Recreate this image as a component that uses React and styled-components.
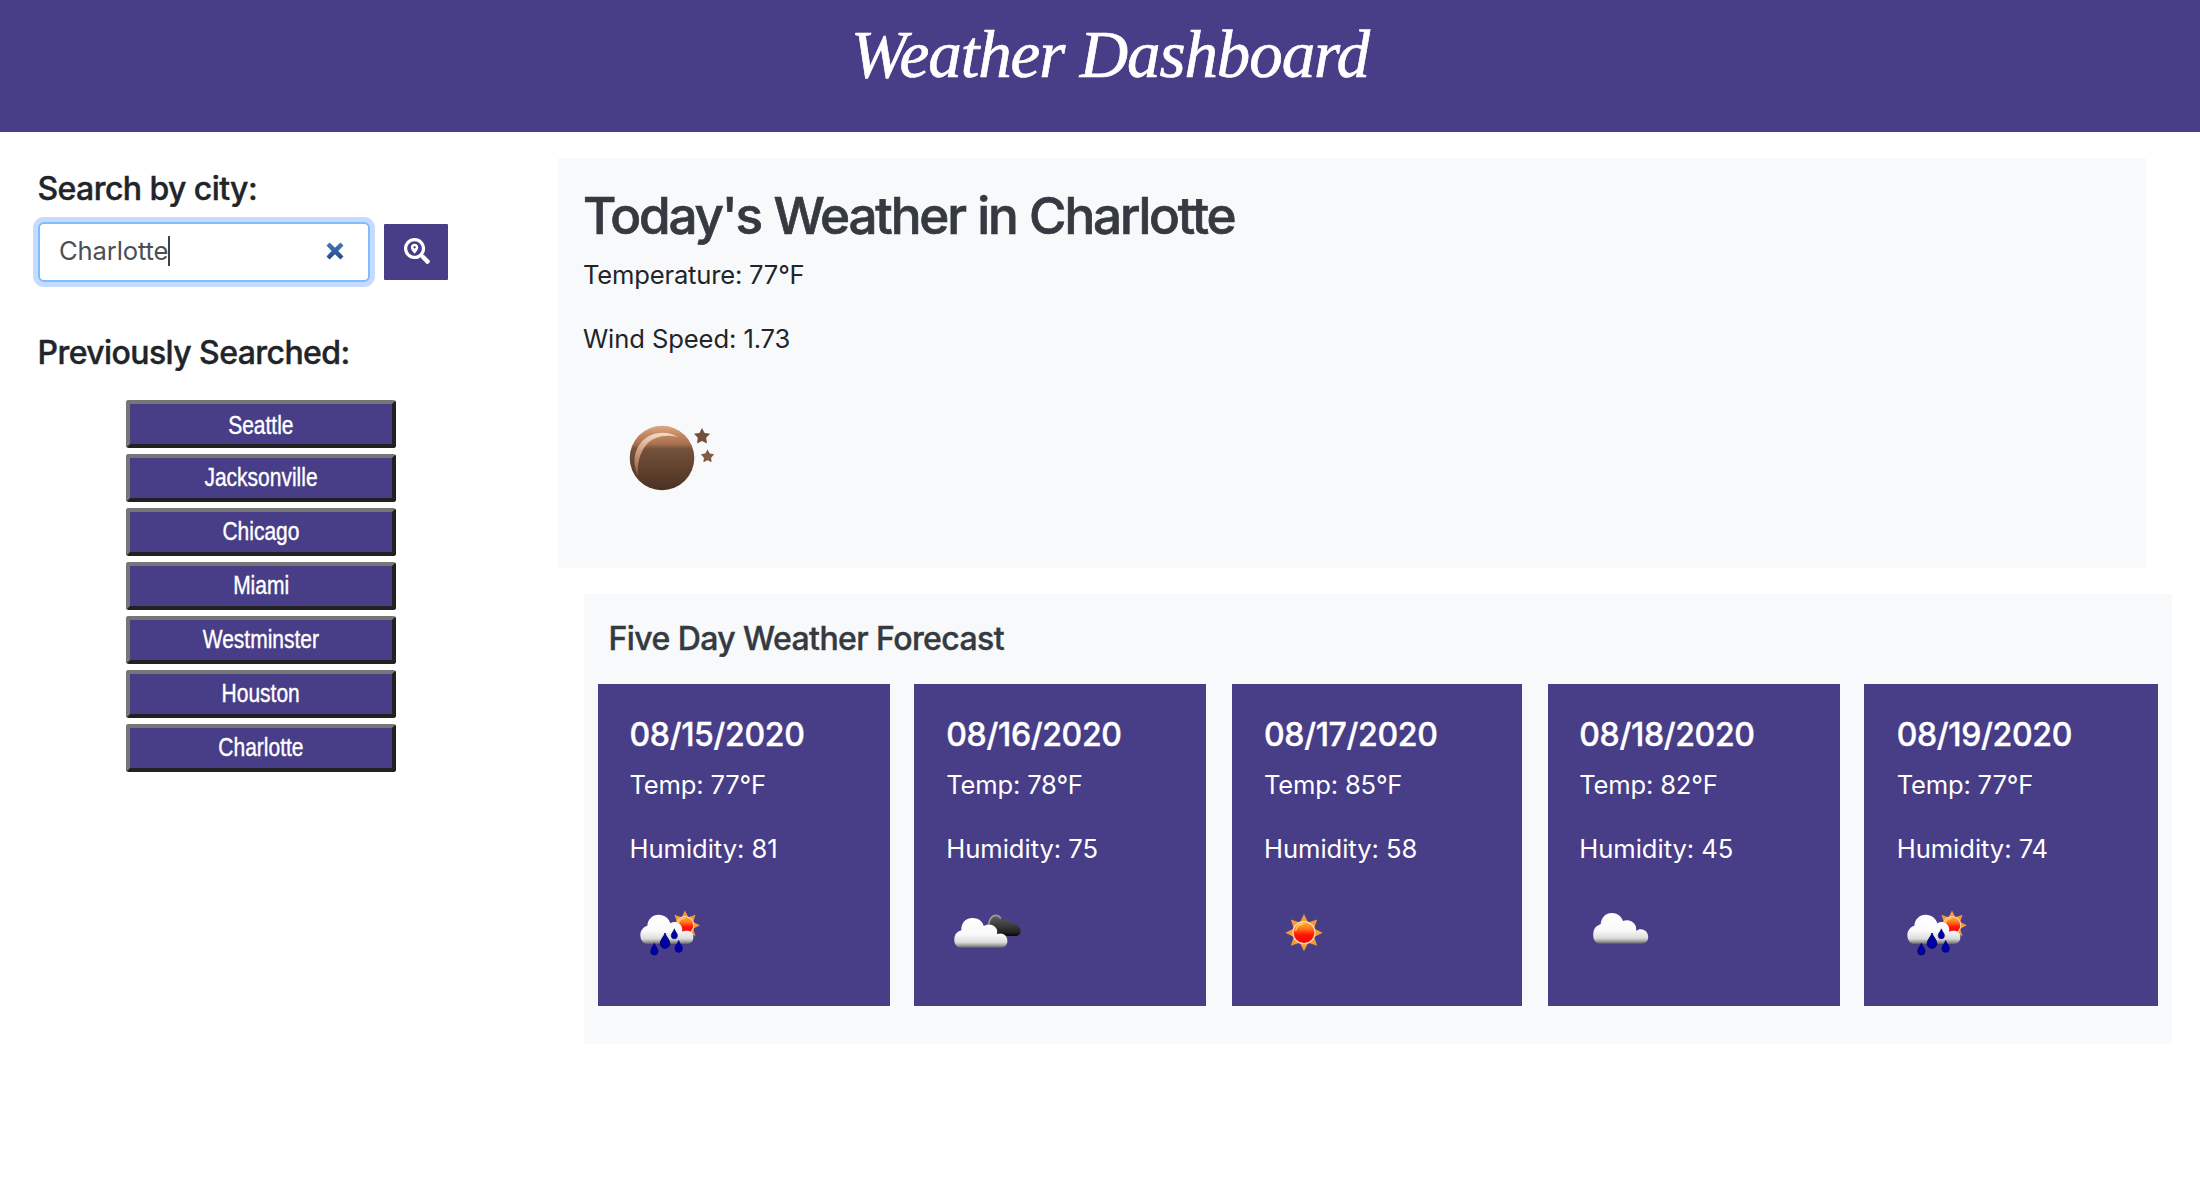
import React from "react";
import styled, { createGlobalStyle } from "styled-components";
import { FaSearchLocation } from "react-icons/fa";

const GlobalStyle = createGlobalStyle`
  *, *::before, *::after { box-sizing: border-box; }
  body {
    margin: 0;
    background: #fff;
    color: #212529;
    font-family: Inter, "Liberation Sans", sans-serif;
    font-size: 25.6px;
    line-height: 1.5;
  }
`;

const Header = styled.header`
  display: flex;
  justify-content: center;
  height: 132px;
  padding: 12px 0 0 20px;
  background: #483d87;
`;

const Title = styled.h1`
  margin: 0;
  color: #fff;
  font-family: "Apple Chancery", "Liberation Serif", serif;
  font-size: 67px;
  font-style: italic;
  font-weight: 400;
  line-height: 84px;
  letter-spacing: -1.1px;
  white-space: nowrap;
  -webkit-text-stroke: 0.7px #fff;
`;

const Layout = styled.div`
  display: grid;
  grid-template-columns: 558px 1614px;
  align-items: start;
`;

const Sidebar = styled.aside`
  padding: 38.4px 0 0 37.5px;
`;

const Heading = styled.h5`
  margin: 0;
  font-size: 32px;
  font-weight: 500;
  line-height: 38.4px;
  letter-spacing: -0.58px;
  white-space: nowrap;
  -webkit-text-stroke: 0.4px currentColor;
`;

const SearchRow = styled.div`
  display: flex;
  align-items: center;
  gap: 14px;
  margin: 13.2px 0 51.9px 0.5px;
`;

const Field = styled.div`
  display: flex;
  align-items: center;
  width: 332px;
  height: 60px;
  padding: 0 24px 2px 19px;
  border: 2px solid #80bdff;
  border-radius: 6px;
  background: #fff;
  box-shadow: 0 0 0 5px #c5dcff;
  color: #495057;
  letter-spacing: -0.15px;
`;

const Caret = styled.span`
  width: 2px;
  height: 30px;
  background: #3d4248;
`;

const ClearIcon = styled.svg`
  width: 18px;
  height: 18px;
  margin-left: auto;
`;

const SearchButton = styled.button`
  display: flex;
  align-items: center;
  justify-content: center;
  width: 64px;
  height: 56px;
  padding: 0 0 2px 2px;
  border: 0;
  border-radius: 1px;
  background: #483d87;
  color: #fff;
  font-size: 26px;
`;

const CityList = styled.div`
  display: flex;
  flex-direction: column;
  gap: 6px;
  margin: 27.7px 0 0 88.5px;
`;

const CityButton = styled.button`
  display: flex;
  justify-content: center;
  width: 270px;
  height: 48px;
  padding: ${(p) => (p.$first ? "2px 0 0" : "0")};
  border: 4px solid;
  border-color: #767676 #212121 #212121 #767676;
  border-radius: 3px;
  background: #483d87;
  color: #fff;
  font-family: "Liberation Sans", Arial, sans-serif;
  font-size: 25.6px;
  line-height: 38px;
`;

const CityName = styled.span`
  transform: scaleX(0.82);
  -webkit-text-stroke: 0.4px #fff;
`;

const Main = styled.main`
  display: flex;
  flex-direction: column;
  gap: 26px;
  padding-top: 26px;
`;

const TodayPanel = styled.section`
  width: 1588px;
  height: 410px;
  padding: 27.2px 26px 0 25px;
  background: #f8f9fb;
`;

const TodayTitle = styled.h2`
  margin: 0 0 9.3px;
  color: #343a40;
  font-size: 51.2px;
  font-weight: 500;
  line-height: 61.4px;
  letter-spacing: -2.17px;
  word-spacing: 1px;
  white-space: nowrap;
  -webkit-text-stroke: 0.7px currentColor;
`;

const Reading = styled.p`
  margin: 0 0 25.6px;
  line-height: 38.4px;
  letter-spacing: ${(p) => p.$spacing || "-0.2px"};
  white-space: nowrap;
`;

const Picture = styled.svg`
  display: block;
  width: ${(p) => p.$size}px;
  height: ${(p) => p.$size}px;
  margin: ${(p) => p.$top || 0}px 0 0 ${(p) => p.$left || 0}px;
`;

const ForecastPanel = styled.section`
  width: 1588px;
  height: 450px;
  margin-left: 26px;
  padding: 25.9px 14px 0;
  background: #f8f9fb;
`;

const ForecastTitle = styled(Heading)`
  margin: 0 0 25.7px 10.5px;
  color: #343a40;
`;

const Cards = styled.div`
  display: grid;
  grid-template-columns: 316px 318px 316px 316px 294px;
`;

const Card = styled.article`
  width: ${(p) => p.$width}px;
  height: 322px;
  padding: 32.4px 0 0 ${(p) => p.$inset}px;
  background: #483d87;
  color: #fff;
`;

const CardDate = styled(Heading)`
  margin-bottom: 10.8px;
  letter-spacing: -0.33px;
`;

function Gradient({ id, stops }) {
  return (
    <linearGradient id={id} x1="0" y1="0" x2="0" y2="1">
      {stops.map(([offset, color]) => (
        <stop key={offset} offset={offset} stopColor={color} />
      ))}
    </linearGradient>
  );
}

function starPoints(cx, cy, outer, inner, n) {
  return Array.from({ length: n * 2 }, (_, i) => {
    const r = i % 2 ? inner : outer;
    const a = (Math.PI * i) / n - Math.PI / 2;
    return `${(cx + r * Math.cos(a)).toFixed(2)},${(cy + r * Math.sin(a)).toFixed(2)}`;
  }).join(" ");
}

function Defs() {
  return (
    <defs>
      <Gradient id="cloud" stops={[[0, "#fff"], [0.55, "#fafafa"], [0.82, "#dcdcdc"], [0.92, "#a0a0a0"], [1, "#636363"]]} />
      <Gradient id="dark" stops={[[0, "#626262"], [0.5, "#3c3c3c"], [0.8, "#252525"], [1, "#050505"]]} />
      <Gradient id="sun" stops={[[0, "#ffb52e"], [0.35, "#ff6a1c"], [0.6, "#ff1508"], [1, "#fa0505"]]} />
      <Gradient id="moon" stops={[[0, "#e0a880"], [0.15, "#c18560"], [0.28, "#a87250"], [0.36, "#74513a"], [0.7, "#5f402d"], [1, "#4a3023"]]} />
      <Gradient id="shine" stops={[[0, "#f3dccb"], [0.4, "#d3a182"], [1, "#8a5c40"]]} />
    </defs>
  );
}

function Sun({ cx, cy, scale = 1 }) {
  return (
    <g transform={`translate(${cx} ${cy}) scale(${scale})`}>
      <polygon points={starPoints(0, 0, 56, 33, 8)} fill="#f69a35" />
      <circle r="35" fill="#ffd9b8" />
      <circle r="31" fill="url(#sun)" />
      <path d="M-25 -7A26 26 0 0 1 -4 -26" fill="none" stroke="#ffd45c" strokeWidth="4" strokeLinecap="round" />
    </g>
  );
}

function Drop({ x, y, s = 1 }) {
  return (
    <path
      transform={`translate(${x} ${y}) scale(${s})`}
      d="M0 -25C3 -13 15 -4 15 8A15 15 0 0 1 -15 8C-15 -4 -3 -13 0 -25Z"
      fill="#0000a8"
      stroke="#00006c"
      strokeWidth="3"
    />
  );
}

function RainIcon() {
  return (
    <Picture viewBox="0 0 240 240" $size={80} $top={-0.9}>
      <Defs />
      <Sun cx={165} cy={97} scale={0.8} />
      <path d="M52 153C38 153 31 139 31 126C31 112 40 102 52 98C53 79 67 65 86 65C104 65 117 76 121 91C135 82 152 90 156 104C157 109 157 112 156 116C162 113 170 112 177 114C187 117 190 125 190 133C190 145 183 153 171 153Z" fill="url(#cloud)" />
      <Drop x={105} y={144} s={0.96} />
      <Drop x={133} y={123} s={0.62} />
      <Drop x={73} y={169} s={0.74} />
      <Drop x={146} y={161} s={0.74} />
    </Picture>
  );
}

function BrokenCloudsIcon() {
  return (
    <Picture viewBox="0 0 240 240" $size={80} $top={-0.9}>
      <Defs />
      <path d="M128 128C115 118 118 100 127 92C130 76 137 65 148 65C158 65 165 73 166 82C181 76 195 82 197 94C209 90 224 101 224 113C224 123 218 129 208 129Z" fill="url(#dark)" />
      <path d="M128 93C131 76 140 68 149 67C156 67 162 71 164 77" fill="none" stroke="#9a9a9a" strokeWidth="5" />
      <path d="M43 164C31 164 24 152 25 139C25 124 34 116 46 112C45 91 58 75 79 75C98 75 110 85 113 99C126 90 146 94 152 108C154 113 154 117 153 123C163 119 175 122 181 131C189 147 181 164 166 164Z" fill="url(#cloud)" />
    </Picture>
  );
}

function ClearIconDay() {
  return (
    <Picture viewBox="0 0 240 240" $size={80} $top={-0.9}>
      <Defs />
      <Sun cx={120} cy={119} />
    </Picture>
  );
}

function CloudIcon() {
  return (
    <Picture viewBox="0 0 240 240" $size={80} $top={-0.9}>
      <Defs />
      <path d="M62 152C48 152 41 138 43 121C44 107 53 97 65 94C67 73 80 60 98 60C115 60 127 69 132 84C147 77 166 85 171 101L172 114C181 105 199 109 205 121C212 137 205 151 190 152Z" fill="url(#cloud)" />
    </Picture>
  );
}

function MoonIcon() {
  return (
    <Picture viewBox="0 0 160 160" $size={160} $top={-6.4} $left={0.8}>
      <Defs />
      <circle cx="78" cy="80" r="32.3" fill="url(#moon)" />
      <path d="M54 98C47 82 51 66 65 58C75 53 86 54 94 59C81 56 70 59 63 66C55 75 53 87 54 98Z" fill="url(#shine)" />
      <polygon points={starPoints(118, 58.5, 8.5, 4.4, 5)} fill="#754f3a" />
      <polygon points={starPoints(123.5, 78.5, 7, 3.8, 5)} fill="#805a45" />
    </Picture>
  );
}

const cities = ["Seattle", "Jacksonville", "Chicago", "Miami", "Westminster", "Houston", "Charlotte"];

const forecast = [
  { date: "08/15/2020", temp: 77, humidity: 81, width: 292, inset: 31.5, Icon: RainIcon },
  { date: "08/16/2020", temp: 78, humidity: 75, width: 292, inset: 32.3, Icon: BrokenCloudsIcon },
  { date: "08/17/2020", temp: 85, humidity: 58, width: 290, inset: 32, Icon: ClearIconDay },
  { date: "08/18/2020", temp: 82, humidity: 45, width: 292, inset: 31.3, Icon: CloudIcon },
  { date: "08/19/2020", temp: 77, humidity: 74, width: 294, inset: 32.7, Icon: RainIcon },
];

export default function App() {
  return (
    <>
      <GlobalStyle />
      <Header>
        <Title>Weather Dashboard</Title>
      </Header>
      <Layout>
        <Sidebar>
          <Heading>Search by city:</Heading>
          <SearchRow>
            <Field>
              <span>Charlotte</span>
              <Caret />
              <ClearIcon viewBox="0 0 18 18">
                <defs>
                  <Gradient id="clear" stops={[[0, "#4377bd"], [1, "#254a88"]]} />
                </defs>
                <path d="M3.6 .5L9 5.7L14.4 .5L17.5 3.6L12.3 9L17.5 14.4L14.4 17.5L9 12.3L3.6 17.5L.5 14.4L5.7 9L.5 3.6Z" fill="url(#clear)" />
              </ClearIcon>
            </Field>
            <SearchButton aria-label="Search">
              <FaSearchLocation />
            </SearchButton>
          </SearchRow>
          <Heading>Previously Searched:</Heading>
          <CityList>
            {cities.map((city, i) => (
              <CityButton key={city} $first={i === 0}>
                <CityName>{city}</CityName>
              </CityButton>
            ))}
          </CityList>
        </Sidebar>
        <Main>
          <TodayPanel>
            <TodayTitle>Today's Weather in Charlotte</TodayTitle>
            <Reading>Temperature: 77°F</Reading>
            <Reading $spacing="-0.1px">Wind Speed: 1.73</Reading>
            <MoonIcon />
          </TodayPanel>
          <ForecastPanel>
            <ForecastTitle>Five Day Weather Forecast</ForecastTitle>
            <Cards>
              {forecast.map(({ date, temp, humidity, width, inset, Icon }) => (
                <Card key={date} $width={width} $inset={inset}>
                  <CardDate>{date}</CardDate>
                  <Reading>Temp: {temp}°F</Reading>
                  <Reading $spacing="-0.05px">Humidity: {humidity}</Reading>
                  <Icon />
                </Card>
              ))}
            </Cards>
          </ForecastPanel>
        </Main>
      </Layout>
    </>
  );
}
